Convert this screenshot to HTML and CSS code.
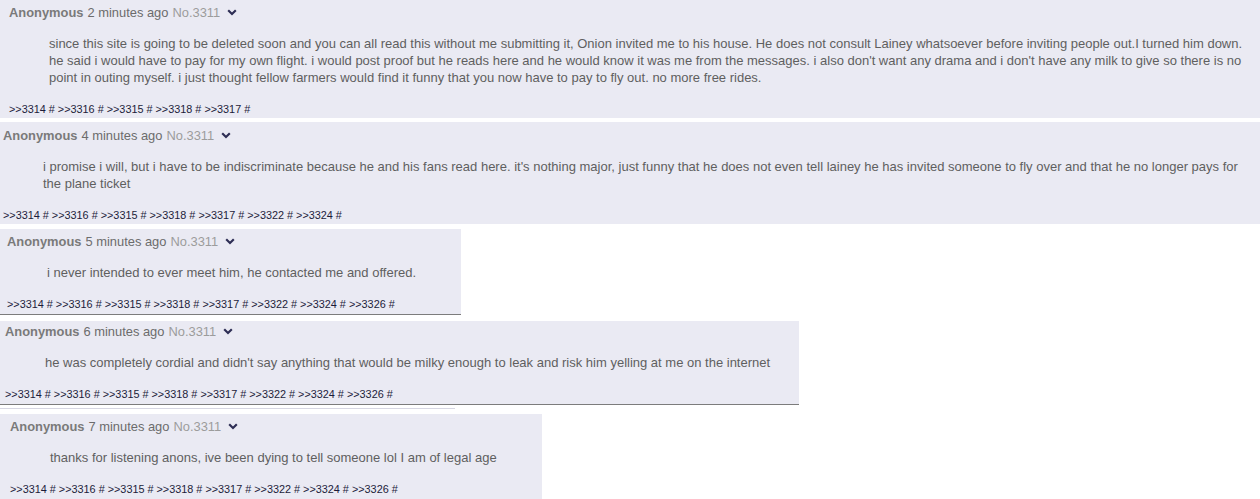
FILE: index.html
```html
<!DOCTYPE html>
<html lang="en">
<head>
<meta charset="utf-8">
<title>Thread</title>
<link rel="stylesheet" href="styles.css">
</head>
<body>
<div class="thread">
  <div class="post p1">
    <div class="head"><span class="name">Anonymous</span> <span class="time">2 minutes ago</span> <span class="num">No.3311</span> <svg class="chev" viewBox="0 0 10 7" width="10" height="7"><path d="M1.2 1.3 L5 5 L8.8 1.3" fill="none" stroke="#2e2e55" stroke-width="2.2"/></svg></div>
    <div class="body">since this site is going to be deleted soon and you can all read this without me submitting it, Onion invited me to his house. He does not consult Lainey whatsoever before inviting people out.I turned him down. he said i would have to pay for my own flight. i would post proof but he reads here and he would know it was me from the messages. i also don't want any drama and i don't have any milk to give so there is no point in outing myself. i just thought fellow farmers would find it funny that you now have to pay to fly out. no more free rides.</div>
    <div class="links">&gt;&gt;3314 # &gt;&gt;3316 # &gt;&gt;3315 # &gt;&gt;3318 # &gt;&gt;3317 #</div>
  </div>
  <div class="post p2">
    <div class="head"><span class="name">Anonymous</span> <span class="time">4 minutes ago</span> <span class="num">No.3311</span> <svg class="chev" viewBox="0 0 10 7" width="10" height="7"><path d="M1.2 1.3 L5 5 L8.8 1.3" fill="none" stroke="#2e2e55" stroke-width="2.2"/></svg></div>
    <div class="body">i promise i will, but i have to be indiscriminate because he and his fans read here. it's nothing major, just funny that he does not even tell lainey he has invited someone to fly over and that he no longer pays for the plane ticket</div>
    <div class="links">&gt;&gt;3314 # &gt;&gt;3316 # &gt;&gt;3315 # &gt;&gt;3318 # &gt;&gt;3317 # &gt;&gt;3322 # &gt;&gt;3324 #</div>
  </div>
  <div class="post p3">
    <div class="head"><span class="name">Anonymous</span> <span class="time">5 minutes ago</span> <span class="num">No.3311</span> <svg class="chev" viewBox="0 0 10 7" width="10" height="7"><path d="M1.2 1.3 L5 5 L8.8 1.3" fill="none" stroke="#2e2e55" stroke-width="2.2"/></svg></div>
    <div class="body">i never intended to ever meet him, he contacted me and offered.</div>
    <div class="links">&gt;&gt;3314 # &gt;&gt;3316 # &gt;&gt;3315 # &gt;&gt;3318 # &gt;&gt;3317 # &gt;&gt;3322 # &gt;&gt;3324 # &gt;&gt;3326 #</div>
  </div>
  <div class="post p4">
    <div class="head"><span class="name">Anonymous</span> <span class="time">6 minutes ago</span> <span class="num">No.3311</span> <svg class="chev" viewBox="0 0 10 7" width="10" height="7"><path d="M1.2 1.3 L5 5 L8.8 1.3" fill="none" stroke="#2e2e55" stroke-width="2.2"/></svg></div>
    <div class="body">he was completely cordial and didn't say anything that would be milky enough to leak and risk him yelling at me on the internet</div>
    <div class="links">&gt;&gt;3314 # &gt;&gt;3316 # &gt;&gt;3315 # &gt;&gt;3318 # &gt;&gt;3317 # &gt;&gt;3322 # &gt;&gt;3324 # &gt;&gt;3326 #</div>
  </div>
  <div class="rule"></div>
  <div class="post p5">
    <div class="head"><span class="name">Anonymous</span> <span class="time">7 minutes ago</span> <span class="num">No.3311</span> <svg class="chev" viewBox="0 0 10 7" width="10" height="7"><path d="M1.2 1.3 L5 5 L8.8 1.3" fill="none" stroke="#2e2e55" stroke-width="2.2"/></svg></div>
    <div class="body">thanks for listening anons, ive been dying to tell someone lol I am of legal age</div>
    <div class="links">&gt;&gt;3314 # &gt;&gt;3316 # &gt;&gt;3315 # &gt;&gt;3318 # &gt;&gt;3317 # &gt;&gt;3322 # &gt;&gt;3324 # &gt;&gt;3326 #</div>
  </div>
</div>
</body>
</html>
```
FILE: styles.css
```css
html, body {
  margin: 0;
  padding: 0;
  background: #ffffff;
}
body {
  font-family: "Liberation Sans", Arial, sans-serif;
  width: 1260px;
  height: 499px;
  overflow: hidden;
}
.thread {
  display: flex;
  flex-direction: column;
  align-items: flex-start;
}
.post {
  background: #eaeaf3;
  box-sizing: border-box;
  padding: 5px 10px 2px 9px;
}
.head {
  font-size: 12.9px;
  line-height: 16px;
  height: 16px;
  white-space: nowrap;
  display: flex;
  align-items: center;
}
.head .name { font-weight: bold; color: #7a7a7a; margin-right: 4px; }
.head .time { color: #6c6c6c; margin-right: 4px; }
.head .num { color: #9c9c9c; margin-right: 7px; }
.chev { display: block; margin-top: -1px; }
.body {
  font-size: 13px;
  line-height: 17px;
  color: #5f5f5f;
  margin: 14px 0 17px 40px;
}
.links {
  font-size: 10.85px;
  line-height: 13px;
  color: #1c1c3a;
  white-space: nowrap;
}
.p1 { width: 1260px; height: 118px; padding-left: 9px; }
.p2 { width: 1260px; margin-top: 4px; padding-top: 6px; padding-left: 3px; height: 102px; }
.p3 {
  width: 461px;
  margin-top: 5px;
  padding-left: 7px;
  padding-bottom: 3px;
  border-bottom: 1px solid #7c7c7c;
}
.p4 {
  width: 799px;
  margin-top: 6px;
  padding-top: 3px;
  padding-left: 5px;
  padding-bottom: 3px;
  border-bottom: 1px solid #7c7c7c;
}
.rule {
  width: 455px;
  height: 1px;
  margin-top: 3px;
  background: #d6d6e2;
}
.p5 {
  width: 542px;
  margin-top: 5px;
  padding-left: 10px;
  height: 90px;
}
```
